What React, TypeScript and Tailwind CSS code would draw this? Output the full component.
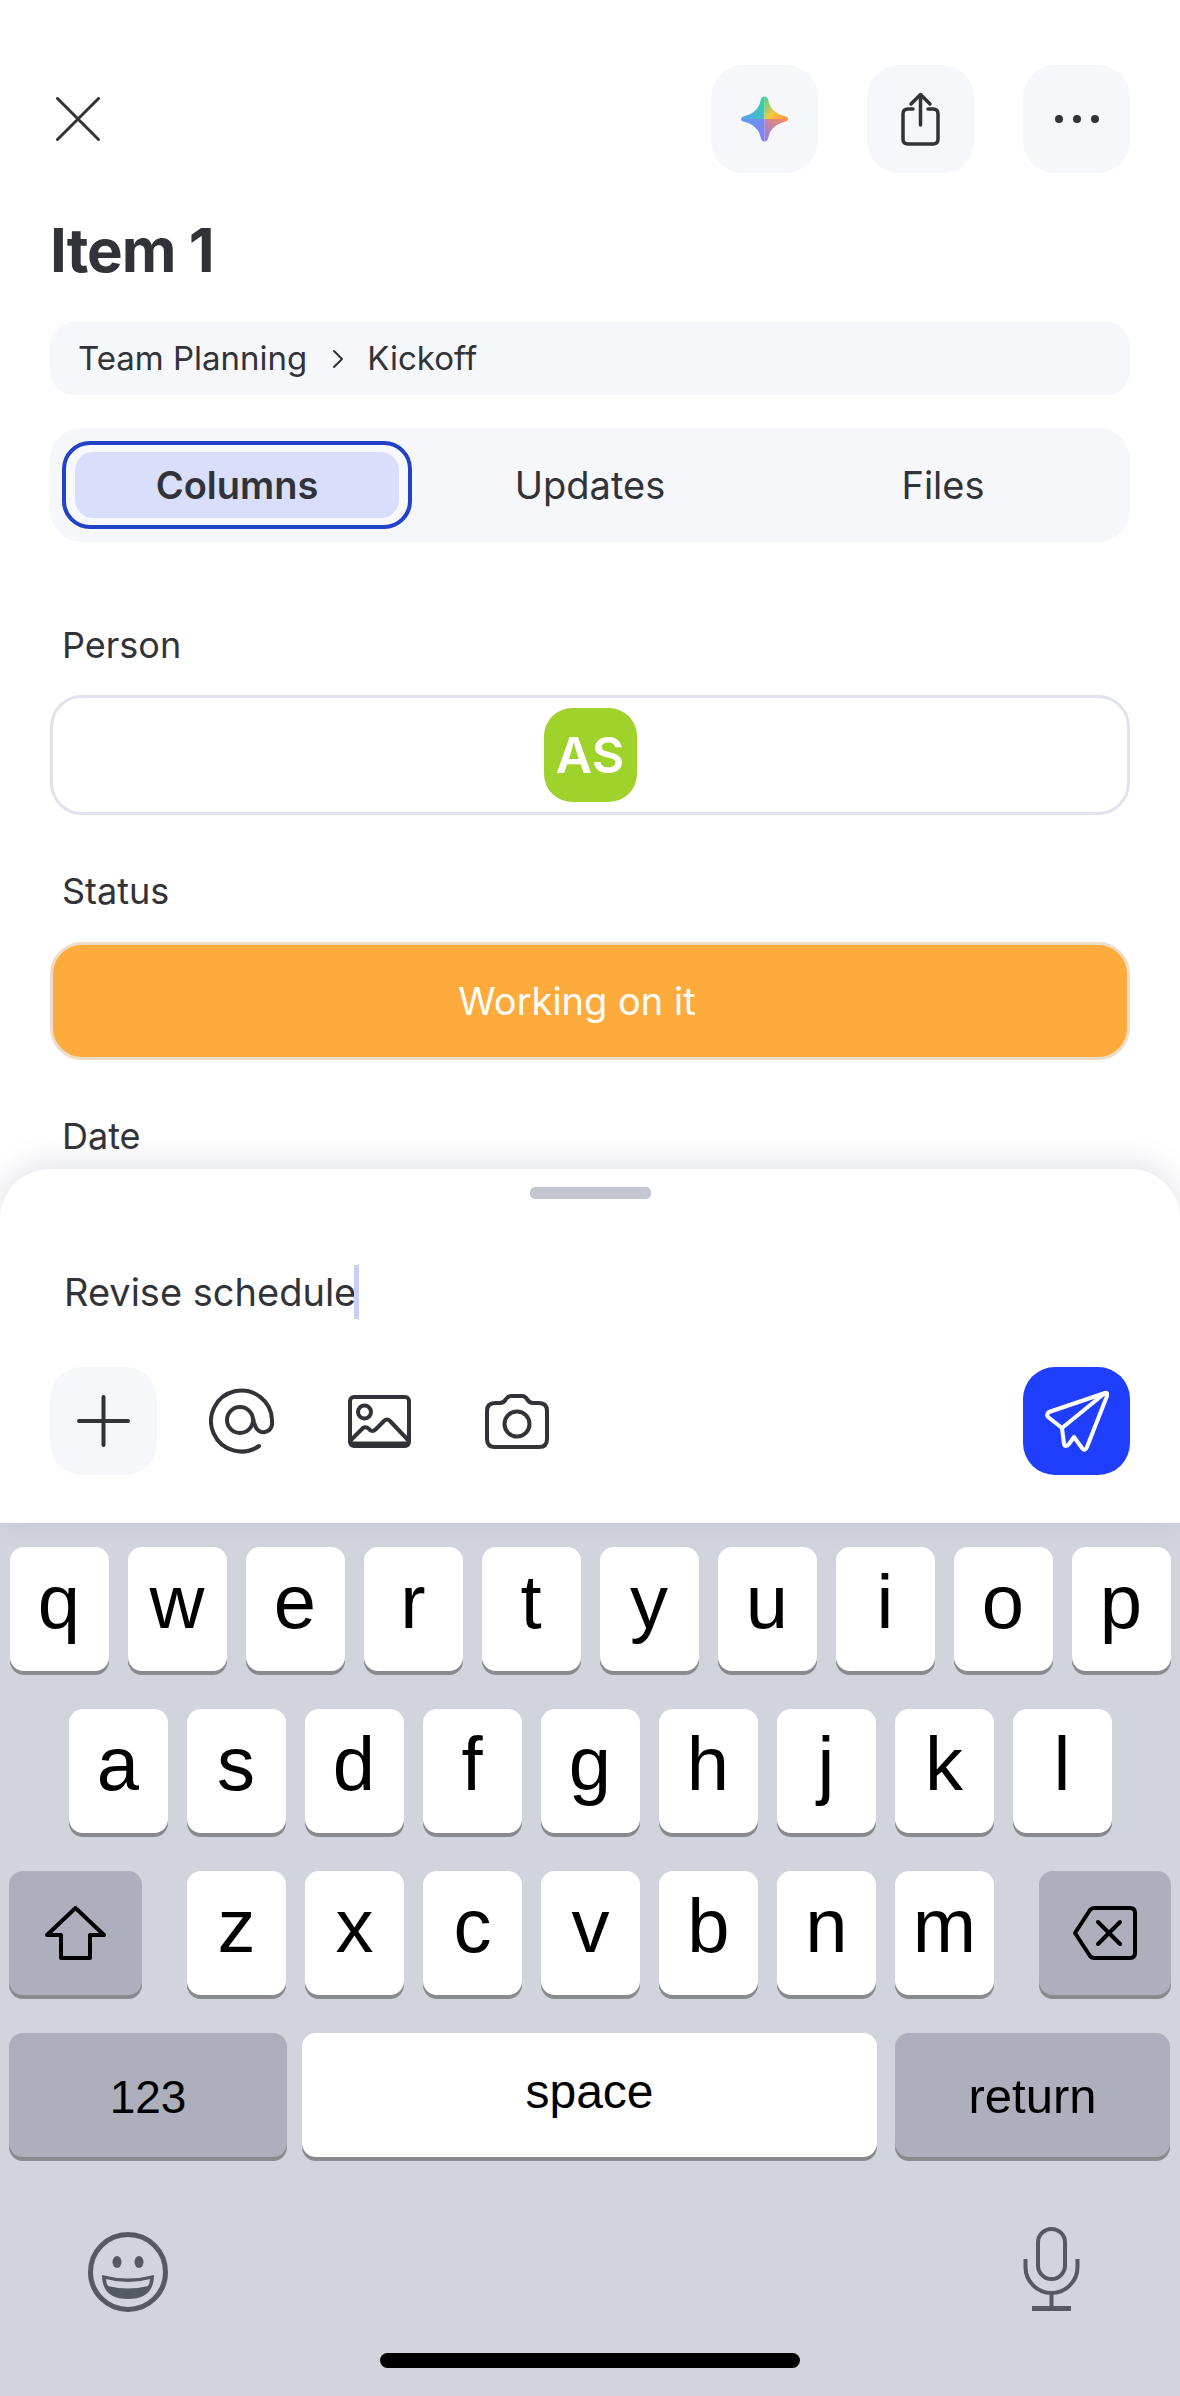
const FONT = "font-['Inter','Noto_Sans',sans-serif]";
const KEYFONT = "font-['Liberation_Sans',Arial,sans-serif]";

function Key({ label }: { label: string }) {
  return (
    <div className={`flex h-[124px] w-[99px] items-center justify-center rounded-[14px] bg-white pb-[14px] text-[76px] leading-none text-black shadow-[0_4px_0_#898a8e] ${KEYFONT}`}>
      {label}
    </div>
  );
}

function Spark() {
  return (
    <svg width="47" height="46" viewBox="0 0 47 46">
      <defs>
        <linearGradient id="tl" x1="0" y1="1" x2="1" y2="0"><stop offset="0" stopColor="#5b9ff2" /><stop offset="0.6" stopColor="#3fc3c0" /><stop offset="1" stopColor="#2ed39a" /></linearGradient>
        <linearGradient id="tr" x1="0" y1="0" x2="1" y2="1"><stop offset="0" stopColor="#3ed28c" /><stop offset="0.55" stopColor="#f5c843" /><stop offset="1" stopColor="#ff8f3d" /></linearGradient>
        <linearGradient id="br" x1="1" y1="0" x2="0" y2="1"><stop offset="0" stopColor="#ff8f50" /><stop offset="1" stopColor="#8d7cf0" /></linearGradient>
        <linearGradient id="bl" x1="0" y1="0" x2="1" y2="1"><stop offset="0" stopColor="#5e9af3" /><stop offset="1" stopColor="#8a7df0" /></linearGradient>
      </defs>
      <path d="M23.5 23 V0.5 Q20.5 0.5 19.5 5 Q17 17 2 20.5 Q0 21.5 0 23 Z" fill="url(#tl)" />
      <path d="M23.5 23 V0.5 Q26.5 0.5 27.5 5 Q30 17 45 20.5 Q47 21.5 47 23 Z" fill="url(#tr)" />
      <path d="M23.5 23 V45.5 Q26.5 45.5 27.5 41 Q30 29 45 25.5 Q47 24.5 47 23 Z" fill="url(#br)" />
      <path d="M23.5 23 V45.5 Q20.5 45.5 19.5 41 Q17 29 2 25.5 Q0 24.5 0 23 Z" fill="url(#bl)" />
    </svg>
  );
}

function IconButton({ children }: { children: React.ReactNode }) {
  return (
    <div className="flex h-[108px] w-[107px] items-center justify-center rounded-[32px] bg-[#f6f7fb]">
      {children}
    </div>
  );
}

export default function App() {
  return (
    <div className={`flex h-[2396px] w-[1180px] flex-col overflow-hidden bg-white text-[#323338] ${FONT}`}>
      <div className="flex h-[1169px] shrink-0 flex-col overflow-hidden px-[50px] pt-[65px]">
        <div className="flex items-center justify-between">
          <svg className="ml-[6px]" width="44" height="44" viewBox="0 0 44 44" fill="none" stroke="#323338" strokeWidth="3" strokeLinecap="round">
            <path d="M1.5 1.5 L42.5 42.5 M42.5 1.5 L1.5 42.5" />
          </svg>
          <div className="flex gap-[49px]">
            <IconButton><Spark /></IconButton>
            <IconButton>
              <svg width="39" height="54" viewBox="0 0 39 54" fill="none" stroke="#323338" strokeWidth="3.5" strokeLinecap="round" strokeLinejoin="round">
                <path d="M12 17 H7 Q2 17 2 22 V47 Q2 52 7 52 H32 Q37 52 37 47 V22 Q37 17 32 17 H27" />
                <path d="M19.5 33 V3 M10 12 L19.5 2.5 L29 12" />
              </svg>
            </IconButton>
            <IconButton>
              <div className="flex gap-[10px]">
                <div className="h-[8px] w-[8px] rounded-full bg-[#323338]" />
                <div className="h-[8px] w-[8px] rounded-full bg-[#323338]" />
                <div className="h-[8px] w-[8px] rounded-full bg-[#323338]" />
              </div>
            </IconButton>
          </div>
        </div>

        <div className="mt-[47px] h-[60px] text-[60px] font-bold leading-[60px] tracking-[-1px]">Item 1</div>

        <div className="mt-[42px] flex h-[73px] items-center rounded-[24px] bg-[#f6f7fb] pl-[28px] text-[33px] text-[#323338]">
          <span>Team Planning</span>
          <svg className="ml-[25px]" width="12" height="20" viewBox="0 0 12 20" fill="none" stroke="#323338" strokeWidth="2" strokeLinecap="round" strokeLinejoin="round">
            <path d="M2 2 L10 10 L2 18" />
          </svg>
          <span className="ml-[23px]">Kickoff</span>
        </div>

        <div className="mt-[33px] grid h-[114px] grid-cols-3 items-center gap-[3px] rounded-[32px] bg-[#f6f7fb] px-[12px] text-[38px]">
          <div className="flex h-[88px] flex-col rounded-[28px] border-[4px] border-[#2343c7] bg-[#f8f9fe] px-[9px] py-[7px]">
            <div className="flex flex-1 items-center justify-center rounded-[18px] bg-[#d9dffb] font-semibold">Columns</div>
          </div>
          <div className="text-center">Updates</div>
          <div className="text-center">Files</div>
        </div>

        <div className="mt-[83px] h-[40px] pl-[12px] text-[36px] leading-[40px]">Person</div>
        <div className="mt-[30px] flex h-[120px] shrink-0 items-center justify-center rounded-[32px] border-[3px] border-[#e0e2ec]">
          <div className="flex h-[94px] w-[93px] items-center justify-center rounded-[28px] bg-[#9fd32b] text-[50px] font-semibold text-white">AS</div>
        </div>

        <div className="mt-[56px] h-[40px] pl-[12px] text-[36px] leading-[40px]">Status</div>
        <div className="mt-[31px] flex h-[118px] shrink-0 items-center justify-center rounded-[32px] border-[3px] border-[#ecdcc8] bg-[#fdab3d] pr-[26px] text-[38px] text-white">
          Working on it
        </div>

        <div className="mt-[56px] h-[40px] pl-[12px] text-[36px] leading-[40px]">Date</div>
      </div>

      <div className="relative h-[354px] shrink-0 rounded-t-[50px] bg-white shadow-[0_-6px_30px_rgba(110,115,145,0.2)]">
        <div className="mx-auto mt-[18px] h-[12px] w-[121px] rounded-[5px] bg-[#c3c5cf]" />
        <div className="mt-[66px] flex h-[54px] items-center pl-[64px] text-[38px]">
          <span>Revise schedule</span>
          <div className="-ml-[2px] h-[54px] w-[5px] bg-[#c9d0f5]" />
        </div>
        <div className="mt-[48px] flex items-center px-[50px]">
          <IconButton>
            <svg width="53" height="52" viewBox="0 0 53 52" fill="none" stroke="#323338" strokeWidth="4" strokeLinecap="round">
              <path d="M2 26 H51 M26.5 2 V50" />
            </svg>
          </IconButton>
          <svg className="ml-[52px]" width="65" height="66" viewBox="0 0 65 66" fill="none" stroke="#323338" strokeWidth="4" strokeLinecap="round" strokeLinejoin="round">
            <path d="M50 58 A30.5 30.5 0 1 1 63 32 V34 A8.5 8.5 0 0 1 46 37 Q44.5 35 44.5 32" />
            <circle cx="31" cy="32" r="13" />
          </svg>
          <svg className="ml-[74px]" width="63" height="53" viewBox="0 0 63 53" fill="none" stroke="#323338" strokeWidth="4" strokeLinecap="round" strokeLinejoin="round">
            <rect x="2" y="2" width="59" height="49" rx="4" />
            <circle cx="16.5" cy="17" r="6.5" />
            <path d="M3 45 L15 33 Q18 31 21 34 Q24 38 28 34 L36 26 Q39 23 42 26 L60 45" />
            <path d="M3 48.5 H60" />
          </svg>
          <svg className="ml-[74px]" width="64" height="55" viewBox="0 0 64 55" fill="none" stroke="#323338" strokeWidth="4" strokeLinecap="round" strokeLinejoin="round">
            <path d="M10 9 H15 Q19 9 21 5 Q23 2 26 2 H37 Q40 2 42 5 Q44 9 48 9 H54 Q62 9 62 17 V45 Q62 53 54 53 H10 Q2 53 2 45 V17 Q2 9 10 9 Z" />
            <circle cx="32" cy="30" r="12.5" />
          </svg>
          <div className="ml-auto flex h-[108px] w-[107px] items-center justify-center rounded-[32px] bg-[#1f3eff]">
            <svg width="64" height="62" viewBox="0 0 64 62" fill="none" stroke="#ffffff" strokeWidth="4" strokeLinecap="round" strokeLinejoin="round">
              <path d="M60 3 L4 22 Q1 24 3 27 L17 38 L19 54 Q20 58 24 54 L29 47 L37 58 Q40 62 42 57 L62 6 Q63 2 60 3 Z" />
              <path d="M60 3 L17 38" />
            </svg>
          </div>
        </div>
      </div>

      <div className="flex flex-1 flex-col bg-[#d1d4dc] pt-[24px]">
        <div className="flex justify-center gap-[19px]">
          {"qwertyuiop".split("").map((k) => <Key key={k} label={k} />)}
        </div>
        <div className="mt-[38px] flex justify-center gap-[19px]">
          {"asdfghjkl".split("").map((k) => <Key key={k} label={k} />)}
        </div>
        <div className="mt-[38px] flex justify-between px-[9px]">
          <div className="flex h-[124px] w-[133px] items-center justify-center rounded-[14px] bg-[#adb0bc] shadow-[0_4px_0_#898a8e]">
            <svg width="61" height="54" viewBox="0 0 61 54" fill="none" stroke="#000000" strokeWidth="4" strokeLinejoin="round">
              <path d="M30.5 2 L59 29 H45 V52 H16 V29 H2 Z" />
            </svg>
          </div>
          <div className="flex gap-[19px]">
            {"zxcvbnm".split("").map((k) => <Key key={k} label={k} />)}
          </div>
          <div className="flex h-[124px] w-[132px] items-center justify-center rounded-[14px] bg-[#adb0bc] shadow-[0_4px_0_#898a8e]">
            <svg width="64" height="54" viewBox="0 0 64 54" fill="none" stroke="#000000" strokeWidth="4" strokeLinejoin="round" strokeLinecap="round">
              <path d="M2 27 L17 4 Q19 2 21 2 H57 Q62 2 62 7 V47 Q62 52 57 52 H21 Q19 52 17 50 Z" />
              <path d="M25 16 L47 38 M47 16 L25 38" />
            </svg>
          </div>
        </div>
        <div className={`mt-[38px] flex px-[9px] text-black ${KEYFONT}`}>
          <div className="flex h-[124px] w-[278px] items-center justify-center rounded-[14px] bg-[#adb0bc] pt-[4px] text-[46px] shadow-[0_4px_0_#898a8e]">123</div>
          <div className="ml-[15px] flex h-[124px] w-[575px] items-center justify-center rounded-[14px] bg-white pb-[7px] text-[48px] shadow-[0_4px_0_#898a8e]">space</div>
          <div className="ml-[18px] flex h-[124px] w-[275px] items-center justify-center rounded-[14px] bg-[#adb0bc] pt-[3px] text-[49px] shadow-[0_4px_0_#898a8e]">return</div>
        </div>
        <div className="mt-[70px] flex items-start justify-between pl-[88px] pr-[100px]">
          <svg className="mt-[5px]" width="80" height="80" viewBox="0 0 80 80" fill="none">
            <circle cx="40" cy="40" r="37.5" stroke="#555962" strokeWidth="5" />
            <ellipse cx="29" cy="30" rx="4.5" ry="6" fill="#555962" />
            <ellipse cx="51" cy="30" rx="4.5" ry="6" fill="#555962" />
            <path d="M14 43 Q40 50 66 43 Q66 67 40 67 Q14 67 14 43 Z" fill="#555962" />
            <path d="M18 47 Q40 53 62 47 Q62 51 60 54 Q40 59 20 54 Q18 51 18 47 Z" fill="#d1d4dc" />
          </svg>
          <svg width="57" height="84" viewBox="0 0 57 84" fill="none" stroke="#555962" strokeWidth="4">
            <rect x="15" y="2" width="27" height="50" rx="13.5" />
            <path d="M2.5 32 V40 A26 26 0 0 0 54.5 40 V32" />
            <path d="M28.5 66 V80" />
            <path d="M9 81.5 H48" strokeWidth="5" />
          </svg>
        </div>
        <div className="mx-auto mt-[41px] h-[15px] w-[420px] rounded-[8px] bg-black" />
      </div>
    </div>
  );
}
